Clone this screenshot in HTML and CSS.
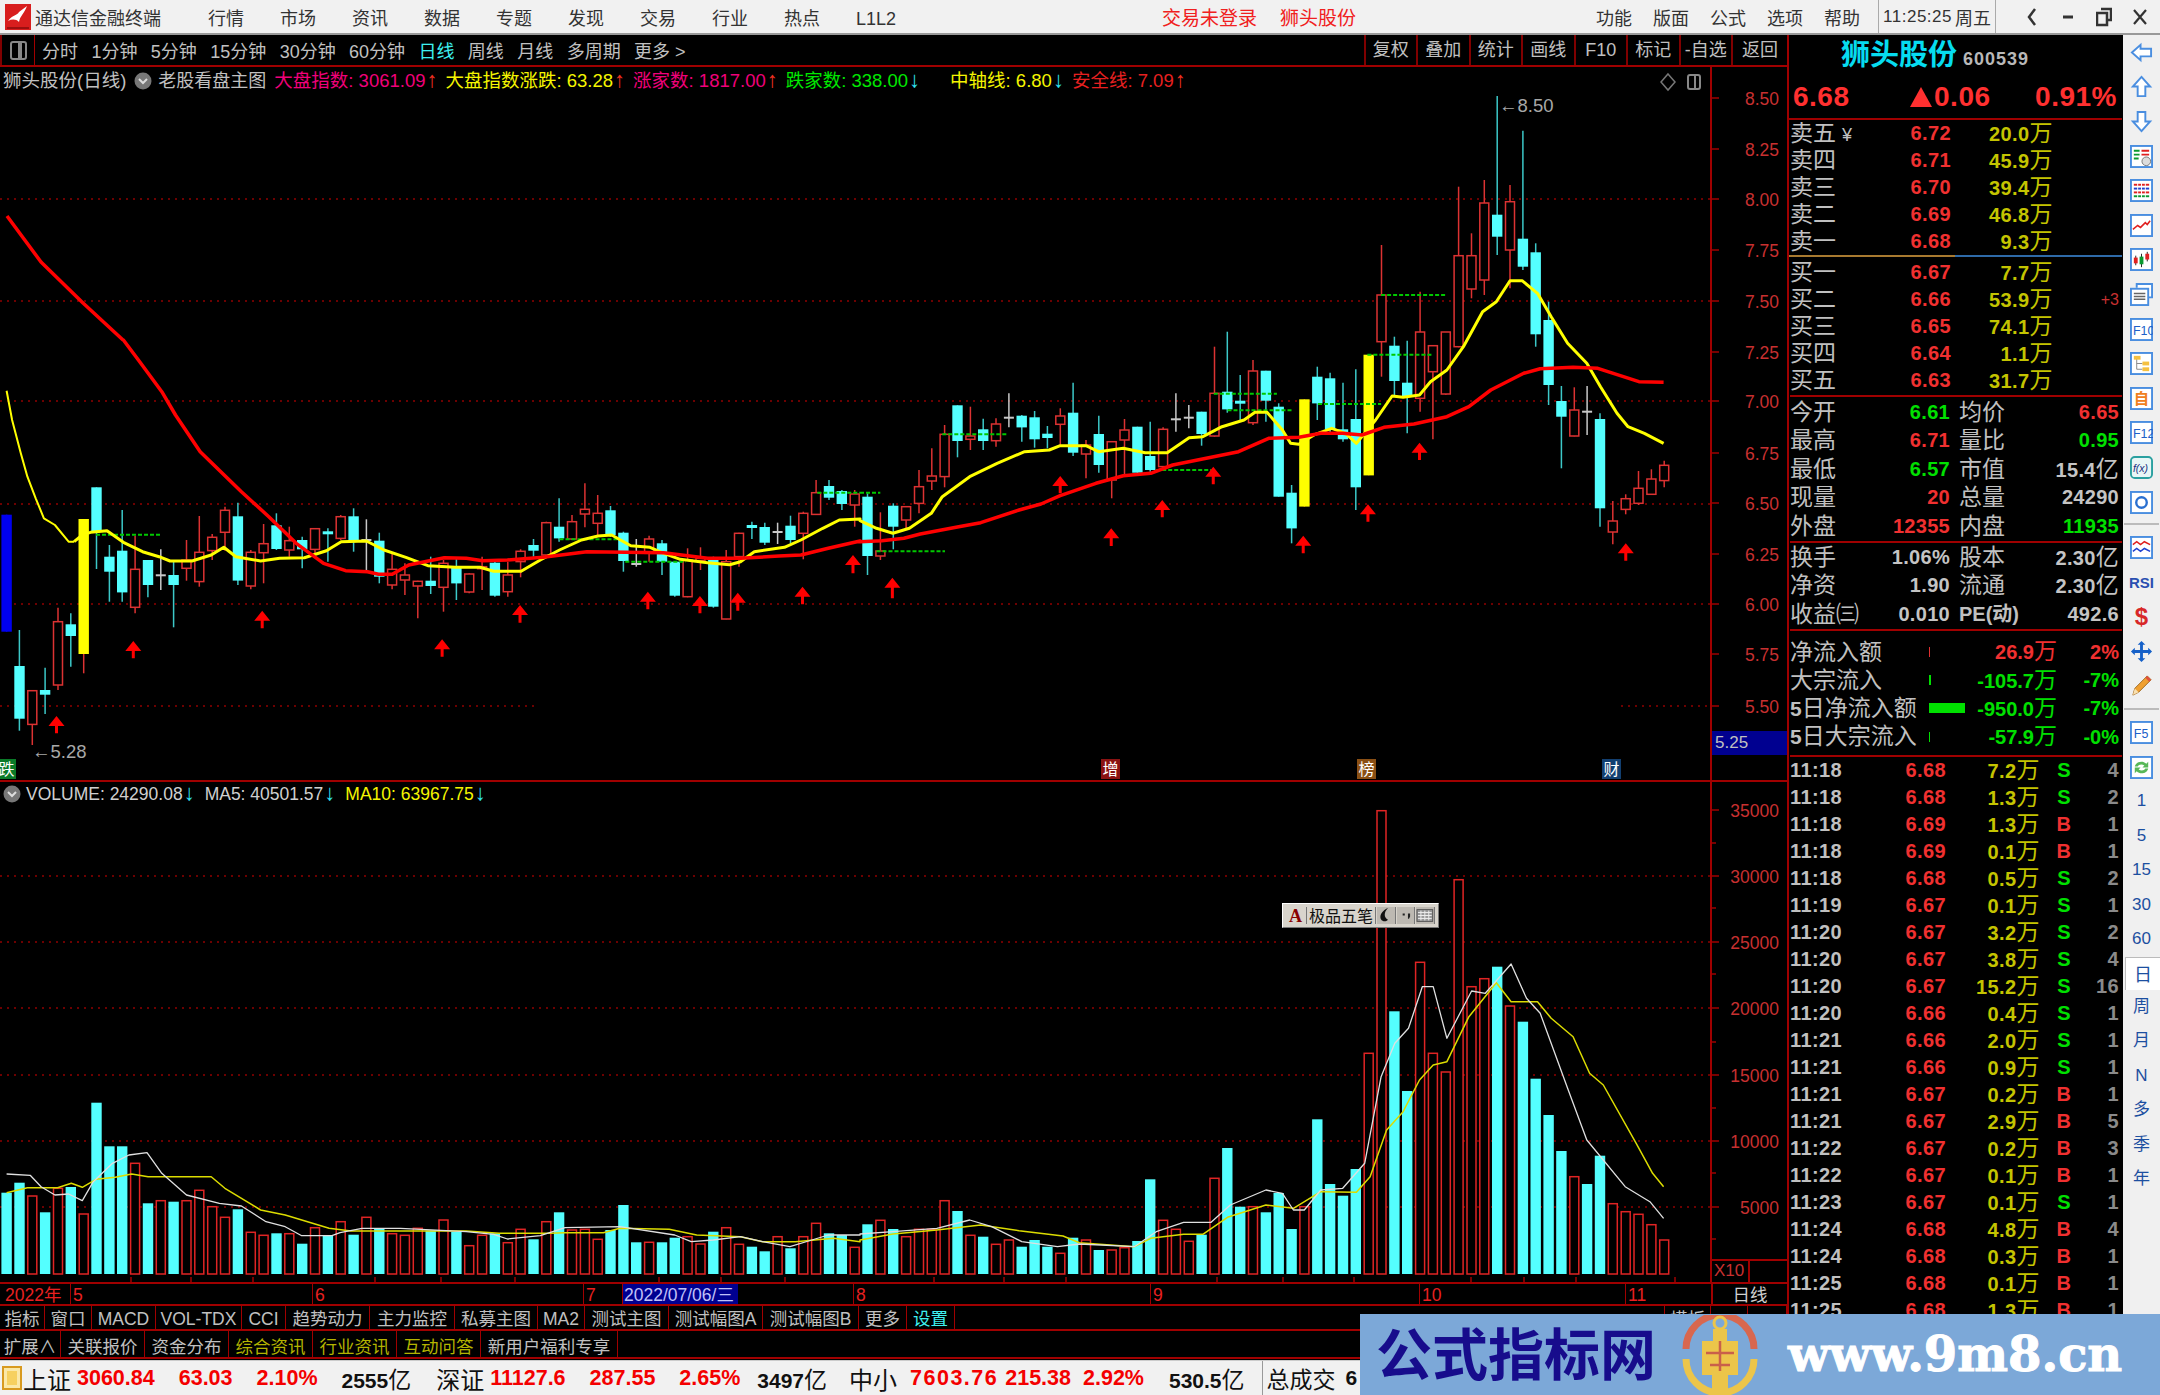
FILE: index.html
```html
<!DOCTYPE html>
<html lang="zh-CN">
<head>
    <meta charset="UTF-8">
    <title>通达信金融终端</title>
    <link rel="stylesheet" href="styles.css">
</head>
<body>
    <header class="topbar">
        <svg class="logo" viewBox="0 0 26 26">
            <rect width="26" height="26" fill="#d81e1e"/>
            <path d="M3 17 C8 10 12 12 14 8 L22 2 C19 10 15 12 14 18 C11 15 7 15 3 17Z" fill="#fff"/>
            <path d="M2 24 L24 24" stroke="#9b1010" stroke-width="2"/>
        </svg>
        <span class="app-name">通达信金融终端</span>
        <nav class="menu">
            <span>行情</span><span>市场</span><span>资讯</span><span>数据</span><span>专题</span>
            <span>发现</span><span>交易</span><span>行业</span><span>热点</span><span>L1L2</span>
        </nav>
        <div class="notice"><span>交易未登录</span><span>狮头股份</span></div>
        <nav class="menu menu-right">
            <span>功能</span><span>版面</span><span>公式</span><span>选项</span><span>帮助</span>
        </nav>
        <div class="clock"><span>11:25:25</span><span class="weekday">周五</span></div>
        <div class="winctl">
            <svg viewBox="0 0 16 20"><path d="M11 2 L5 10 L11 18" fill="none" stroke="#333" stroke-width="2.5"/></svg>
            <svg viewBox="0 0 16 20"><path d="M3 10 H13" stroke="#333" stroke-width="3"/></svg>
            <svg viewBox="0 0 16 20"><path d="M5 2 H15 V13 H12 M1 6 H11 V18 H1Z" fill="none" stroke="#333" stroke-width="2.5"/></svg>
            <svg viewBox="0 0 16 20"><path d="M2 3 L14 17 M14 3 L2 17" stroke="#333" stroke-width="2.2"/></svg>
        </div>
    </header>

    <div class="workspace">
        <main class="main">
            <div class="toolbar">
                <div class="tb-icon"><span class="tb-glyph"></span></div>
                <div class="periods">
                    <span>分时</span><span>1分钟</span><span>5分钟</span><span>15分钟</span><span>30分钟</span><span>60分钟</span>
                    <span class="cyan">日线</span><span>周线</span><span>月线</span><span>多周期</span><span>更多 &gt;</span>
                </div>
                <div class="actions">
                    <span>复权</span><span>叠加</span><span>统计</span><span>画线</span><span>F10</span><span>标记</span><span>-自选</span><span>返回</span>
                </div>
            </div>

            <div class="chart-wrap">
                <svg id="chart" class="chart" viewBox="0 67 1787 1215" width="1787" height="1215"></svg>

                <div class="legend price-legend">
                    <span class="gray">狮头股份(日线)</span>
                    <svg class="chev" viewBox="0 0 18 18"><circle cx="9" cy="9" r="8.5" fill="#777"/><path d="M5 7 L9 11 L13 7" fill="none" stroke="#ddd" stroke-width="2"/></svg>
                    <span class="gray main-name">老股看盘主图</span>
                    <span class="pink">大盘指数: 3061.09<i class="up">↑</i></span>
                    <span class="yellow">大盘指数涨跌: 63.28<i class="up">↑</i></span>
                    <span class="pink">涨家数: 1817.00<i class="up">↑</i></span>
                    <span class="green">跌家数: 338.00<i class="down">↓</i></span>
                    <span class="yellow mid">中轴线: 6.80<i class="down">↓</i></span>
                    <span class="red">安全线: 7.09<i class="up">↑</i></span>
                </div>
                <div class="chart-tools">
                    <svg viewBox="0 0 16 20"><path d="M8 2 L15 10 L8 18 L1 10Z" fill="none" stroke="#777" stroke-width="1.5"/></svg>
                    <span class="tb-glyph small"></span>
                </div>

                <span class="peak hi">←8.50</span>
                <span class="peak lo">←5.28</span>
                <span class="badge b-green">跌</span>
                <span class="badge b-red">增</span>
                <span class="badge b-brown">榜</span>
                <span class="badge b-blue">财</span>
                <span class="cursor-price">5.25</span>

                <div class="legend vol-legend">
                    <svg class="chev" viewBox="0 0 18 18"><circle cx="9" cy="9" r="8.5" fill="#777"/><path d="M5 7 L9 11 L13 7" fill="none" stroke="#ddd" stroke-width="2"/></svg>
                    <span class="light">VOLUME: 24290.08<i class="down">↓</i></span>
                    <span class="light">MA5: 40501.57<i class="down">↓</i></span>
                    <span class="yellow">MA10: 63967.75<i class="down">↓</i></span>
                </div>

                <div class="ime">
                    <span class="ime-a">A</span>
                    <span class="ime-name">极品五笔</span>
                    <span class="ime-btn">
                        <svg viewBox="0 0 14 16"><path d="M9 1 C5 5 5 10 9 12 C6 15 1 13 2 8 C3 5 6 2 9 1Z" fill="#111"/></svg>
                    </span>
                    <span class="ime-btn">
                        <svg viewBox="0 0 14 16"><path d="M4 6 H6 V8 H4Z M9 6 H11 V9 L10 11 H9Z" fill="#222"/></svg>
                    </span>
                    <span class="ime-btn">
                        <svg viewBox="0 0 18 16"><rect x="1" y="2" width="16" height="12" fill="#999" stroke="#555"/><path d="M2 5 H16 M2 8 H16 M2 11 H16 M5 3 V13 M9 3 V13 M13 3 V13" stroke="#eee"/></svg>
                    </span>
                </div>
            </div>

            <div class="timeline">
                <span class="red">2022年</span><span class="red">5</span><span class="red">6</span><span class="red">7</span>
                <span class="date-tag">2022/07/06/三</span><span class="tl-gap"></span>
                <span class="red">8</span><span class="red">9</span><span class="red">10</span><span class="red">11</span>
                <span class="tl-end">日线</span>
            </div>

            <div class="tabs tabs-one">
                <span>指标</span><span>窗口</span><span>MACD</span><span>VOL-TDX</span><span>CCI</span><span>趋势动力</span><span>主力监控</span>
                <span>私募主图</span><span>MA2</span><span>测试主图</span><span>测试幅图A</span><span>测试幅图B</span><span>更多</span><span class="cyan">设置</span>
                <span></span><span>模板</span><span></span><span></span>
            </div>
            <div class="tabs tabs-two">
                <span>扩展∧</span><span>关联报价</span><span>资金分布</span><span class="olive">综合资讯</span>
                <span class="olive">行业资讯</span><span class="olive">互动问答</span><span>新用户福利专享</span>
            </div>
        </main>

        <aside class="panel">
            <div class="stock-title"><span class="stock-name">狮头股份</span><span class="stock-code">600539</span></div>
            <div class="quote"><span>6.68</span><span class="q-chg"><i class="tri"></i>0.06</span><span>0.91%</span></div>

            <section class="book">
                <div><span>卖五<i class="yen">¥</i></span><b>6.72</b><em>20.0<u>万</u></em><small></small></div>
                <div><span>卖四</span><b>6.71</b><em>45.9<u>万</u></em><small></small></div>
                <div><span>卖三</span><b>6.70</b><em>39.4<u>万</u></em><small></small></div>
                <div><span>卖二</span><b>6.69</b><em>46.8<u>万</u></em><small></small></div>
                <div><span>卖一</span><b>6.68</b><em>9.3<u>万</u></em><small></small></div>
            </section>
            <div class="book-split"></div>
            <section class="book">
                <div><span>买一</span><b>6.67</b><em>7.7<u>万</u></em><small></small></div>
                <div><span>买二</span><b>6.66</b><em>53.9<u>万</u></em><small>+3</small></div>
                <div><span>买三</span><b>6.65</b><em>74.1<u>万</u></em><small></small></div>
                <div><span>买四</span><b>6.64</b><em>1.1<u>万</u></em><small></small></div>
                <div><span>买五</span><b>6.63</b><em>31.7<u>万</u></em><small></small></div>
            </section>

            <section class="stats first">
                <div><span>今开</span><b class="g">6.61</b><span>均价</span><b class="r">6.65</b></div>
                <div><span>最高</span><b class="r">6.71</b><span>量比</span><b class="g">0.95</b></div>
                <div><span>最低</span><b class="g">6.57</b><span>市值</span><b>15.4<u>亿</u></b></div>
                <div><span>现量</span><b class="r">20</b><span>总量</span><b>24290</b></div>
                <div><span>外盘</span><b class="r">12355</b><span>内盘</span><b class="g">11935</b></div>
            </section>
            <section class="stats">
                <div><span>换手</span><b>1.06%</b><span>股本</span><b>2.30<u>亿</u></b></div>
                <div><span>净资</span><b>1.90</b><span>流通</span><b>2.30<u>亿</u></b></div>
                <div><span>收益㈢</span><b>0.010</b><span class="pe">PE(动)</span><b>492.6</b></div>
            </section>

            <section class="flows">
                <div><span>净流入额</span><i class="flow-bar fb-red"></i><b class="r">26.9<u>万</u></b><b class="r">2%</b></div>
                <div><span>大宗流入</span><i class="flow-bar fb-green2"></i><b class="g">-105.7<u>万</u></b><b class="g">-7%</b></div>
                <div><span><strong>5</strong>日净流入额</span><i class="flow-bar fb-wide"></i><b class="g">-950.0<u>万</u></b><b class="g">-7%</b></div>
                <div><span><strong>5</strong>日大宗流入</span><i class="flow-bar fb-green"></i><b class="g">-57.9<u>万</u></b><b class="g">-0%</b></div>
            </section>

            <section class="trades">
                <div><span>11:18</span><b>6.68</b><em>7.2<u>万</u></em><i class="s">S</i><small>4</small></div>
                <div><span>11:18</span><b>6.68</b><em>1.3<u>万</u></em><i class="s">S</i><small>2</small></div>
                <div><span>11:18</span><b>6.69</b><em>1.3<u>万</u></em><i class="b">B</i><small>1</small></div>
                <div><span>11:18</span><b>6.69</b><em>0.1<u>万</u></em><i class="b">B</i><small>1</small></div>
                <div><span>11:18</span><b>6.68</b><em>0.5<u>万</u></em><i class="s">S</i><small>2</small></div>
                <div><span>11:19</span><b>6.67</b><em>0.1<u>万</u></em><i class="s">S</i><small>1</small></div>
                <div><span>11:20</span><b>6.67</b><em>3.2<u>万</u></em><i class="s">S</i><small>2</small></div>
                <div><span>11:20</span><b>6.67</b><em>3.8<u>万</u></em><i class="s">S</i><small>4</small></div>
                <div><span>11:20</span><b>6.67</b><em>15.2<u>万</u></em><i class="s">S</i><small>16</small></div>
                <div><span>11:20</span><b>6.66</b><em>0.4<u>万</u></em><i class="s">S</i><small>1</small></div>
                <div><span>11:21</span><b>6.66</b><em>2.0<u>万</u></em><i class="s">S</i><small>1</small></div>
                <div><span>11:21</span><b>6.66</b><em>0.9<u>万</u></em><i class="s">S</i><small>1</small></div>
                <div><span>11:21</span><b>6.67</b><em>0.2<u>万</u></em><i class="b">B</i><small>1</small></div>
                <div><span>11:21</span><b>6.67</b><em>2.9<u>万</u></em><i class="b">B</i><small>5</small></div>
                <div><span>11:22</span><b>6.67</b><em>0.2<u>万</u></em><i class="b">B</i><small>3</small></div>
                <div><span>11:22</span><b>6.67</b><em>0.1<u>万</u></em><i class="b">B</i><small>1</small></div>
                <div><span>11:23</span><b>6.67</b><em>0.1<u>万</u></em><i class="s">S</i><small>1</small></div>
                <div><span>11:24</span><b>6.68</b><em>4.8<u>万</u></em><i class="b">B</i><small>4</small></div>
                <div><span>11:24</span><b>6.68</b><em>0.3<u>万</u></em><i class="b">B</i><small>1</small></div>
                <div><span>11:25</span><b>6.68</b><em>0.1<u>万</u></em><i class="b">B</i><small>1</small></div>
                <div><span>11:25</span><b>6.68</b><em>1.3<u>万</u></em><i class="b">B</i><small>1</small></div>
            </section>
        </aside>

        <aside class="sidebar">
            <div class="tool"><svg viewBox="0 0 24 24"><path d="M2 12 L11 4 V8 H22 V16 H11 V20Z" fill="#fff" stroke="#4a8ee0" stroke-width="2"/></svg></div>
            <div class="tool"><svg viewBox="0 0 24 24"><path d="M12 2 L21 12 H16 V22 H8 V12 H3Z" fill="#fff" stroke="#4a8ee0" stroke-width="2"/></svg></div>
            <div class="tool"><svg viewBox="0 0 24 24"><path d="M12 22 L21 12 H16 V2 H8 V12 H3Z" fill="#fff" stroke="#4a8ee0" stroke-width="2"/></svg></div>
            <div class="tool"><svg viewBox="0 0 24 24"><rect x="1" y="1" width="22" height="22" fill="#fff" stroke="#4a8ee0" stroke-width="2"/><path d="M4 6 H10 M4 10 H10 M4 14 H9" stroke="#0a9a30" stroke-width="2"/><path d="M12 6 H20 M12 10 H20" stroke="#e02020" stroke-width="2"/><circle cx="17" cy="17" r="4.5" fill="#ddd" stroke="#777"/></svg></div>
            <div class="tool"><svg viewBox="0 0 24 24"><rect x="1" y="1" width="22" height="22" fill="#fff" stroke="#4a8ee0" stroke-width="2"/><path d="M4 6 H20" stroke="#e02020" stroke-width="2"/><path d="M4 10 H20" stroke="#2040d0" stroke-width="2"/><path d="M4 14 H20" stroke="#e02020" stroke-width="2"/><path d="M4 18 H20" stroke="#0a9a30" stroke-width="2"/><path d="M8 4 V21 M12 4 V21 M16 4 V21" stroke="#fff"/></svg></div>
            <div class="tool"><svg viewBox="0 0 24 24"><rect x="1" y="1" width="22" height="22" fill="#fff" stroke="#4a8ee0" stroke-width="2"/><path d="M3 16 L8 12 L11 14 L16 9 L18 11 L21 7" fill="none" stroke="#e02020" stroke-width="1.6"/></svg></div>
            <div class="tool"><svg viewBox="0 0 24 24"><rect x="1" y="1" width="22" height="22" fill="#fff" stroke="#4a8ee0" stroke-width="2"/><path d="M6 8 V18 M12 6 V20 M18 4 V14" stroke="#222"/><rect x="4" y="10" width="4" height="6" fill="#e02020"/><rect x="10" y="9" width="4" height="8" fill="#0a9a30"/><rect x="16" y="6" width="4" height="6" fill="#e02020"/></svg></div>
            <div class="tool"><svg viewBox="0 0 24 24"><path d="M7 5 V1 H23 V15 H19" fill="#fff" stroke="#4a8ee0" stroke-width="2"/><rect x="1" y="6" width="18" height="17" fill="#fff" stroke="#4a8ee0" stroke-width="2"/><path d="M4 11 H16 M4 14 H16 M4 17 H16" stroke="#666" stroke-width="1.5"/></svg></div>
            <div class="tool"><svg viewBox="0 0 24 24"><rect x="1" y="1" width="22" height="22" fill="#fff" stroke="#4a8ee0" stroke-width="2"/><text x="3" y="18" class="ico-text">F10</text></svg></div>
            <div class="tool"><svg viewBox="0 0 24 24"><rect x="1" y="1" width="22" height="22" fill="#fff" stroke="#4a8ee0" stroke-width="2"/><path d="M7 7 V18 H13 M7 12 H13" fill="none" stroke="#888"/><rect x="4" y="4" width="7" height="4" fill="#f5c040"/><rect x="13" y="10" width="7" height="4" fill="#f5c040"/><rect x="13" y="16" width="7" height="4" fill="#f5c040"/></svg></div>
            <div class="tool"><svg viewBox="0 0 24 24"><rect x="1" y="1" width="22" height="22" fill="#fff" stroke="#4a8ee0" stroke-width="2"/><text x="4" y="18" class="ico-zi">自</text></svg></div>
            <div class="tool"><svg viewBox="0 0 24 24"><rect x="1" y="1" width="22" height="22" fill="#fff" stroke="#4a8ee0" stroke-width="2"/><text x="3" y="18" class="ico-text">F12</text></svg></div>
            <div class="tool"><svg viewBox="0 0 24 24"><rect x="1" y="1" width="22" height="22" rx="4" fill="#e8f6f6" stroke="#2aa0a0" stroke-width="2"/><text x="3" y="17" class="ico-fx">f(x)</text></svg></div>
            <div class="tool"><svg viewBox="0 0 24 24"><rect x="1" y="1" width="22" height="22" fill="#fff" stroke="#4a8ee0" stroke-width="2"/><circle cx="12" cy="12" r="5.5" fill="none" stroke="#2a70d0" stroke-width="2.5"/></svg></div>
            <hr class="tool-sep sep-a">
            <div class="tool"><svg viewBox="0 0 24 24"><rect x="1" y="1" width="22" height="22" fill="#fff" stroke="#4a8ee0" stroke-width="2"/><path d="M3 9 L7 6 L11 9 L15 6 L21 9" fill="none" stroke="#e02020" stroke-width="1.6"/><path d="M3 16 L7 13 L11 16 L15 13 L21 16" fill="none" stroke="#2040d0" stroke-width="1.6"/></svg></div>
            <div class="tool"><span class="ico-rsi">RSI</span></div>
            <div class="tool"><span class="ico-dollar">$</span></div>
            <div class="tool"><svg viewBox="0 0 24 24"><path d="M12 1 L16 5 H13.5 V10.5 H19 V8 L23 12 L19 16 V13.5 H13.5 V19 H16 L12 23 L8 19 H10.5 V13.5 H5 V16 L1 12 L5 8 V10.5 H10.5 V5 H8Z" fill="#1560c8"/></svg></div>
            <div class="tool"><svg viewBox="0 0 24 24"><path d="M3 22 L5 15 L18 2 L22 6 L9 19Z" fill="#f0a030" stroke="#a06a20"/><path d="M3 22 L5 15 L9 19Z" fill="#f8e0b0"/><path d="M18 2 L22 6 L20 8 L16 4Z" fill="#e05040"/></svg></div>
            <hr class="tool-sep sep-b">
            <div class="tool"><svg viewBox="0 0 24 24"><rect x="1" y="1" width="22" height="22" fill="#fff" stroke="#4a8ee0" stroke-width="2"/><text x="4" y="18" class="ico-text">F5</text></svg></div>
            <div class="tool"><svg viewBox="0 0 24 24"><rect x="1" y="1" width="22" height="22" fill="#fff" stroke="#4a8ee0" stroke-width="2"/><path d="M5 11 C6 6 13 4 17 8 L19 6 V12 H13 L15 10 C12 8 9 9 8 11Z M19 13 C18 18 11 20 7 16 L5 18 V12 H11 L9 14 C12 16 15 15 16 13Z" fill="#58b858"/></svg></div>
            <div class="period">1</div>
            <div class="period">5</div>
            <div class="period">15</div>
            <div class="period">30</div>
            <div class="period">60</div>
            <div class="period active">日</div>
            <div class="period">周</div>
            <div class="period">月</div>
            <div class="period">N</div>
            <div class="period">多</div>
            <div class="period">季</div>
            <div class="period">年</div>
        </aside>
    </div>

    <footer class="statusbar">
        <span class="st-icon"></span>
        <span class="st-name">上证</span><b class="st-first">3060.84</b><b>63.03</b><b>2.10%</b><strong>2555<u>亿</u></strong>
        <span class="st-name">深证</span><b class="st-first">11127.6</b><b>287.55</b><b>2.65%</b><strong class="st-sz">3497<u>亿</u></strong>
        <span class="st-name st-zx">中小</span><b class="st-wide">7603.76</b><b class="st-zx-chg">215.38</b><b class="st-zx-pct">2.92%</b><strong class="st-zx-amt">530.5<u>亿</u></strong>
        <span class="st-total">总成交</span><strong class="st-last">6</strong>
    </footer>

    <div class="watermark">
        <span class="wm-cn">公式指标网</span>
        <svg class="wm-logo" viewBox="0 0 80 80">
            <path d="M6 34 A34 34 0 0 1 74 34" fill="none" stroke="#d8674f" stroke-width="7"/>
            <path d="M6 44 A34 34 0 0 0 40 78 A34 34 0 0 0 74 44" fill="none" stroke="#ecc54a" stroke-width="7"/>
            <circle cx="40" cy="8" r="6" fill="none" stroke="#ecc54a" stroke-width="3"/>
            <path d="M33 14 H47 V26 H58 V60 H48 V78 H32 V60 H22 V26 H33Z" fill="#ecc54a"/>
            <path d="M26 38 H54 M40 26 V56 M30 50 H50" stroke="#c9604a" stroke-width="2.5"/>
        </svg>
        <span class="wm-url">www.9m8.cn</span>
    </div>

    <script src="chart.js"></script>
</body>
</html>
```

FILE: styles.css
```css
* {
    box-sizing: border-box;
}
html, body {
    margin: 0;
    padding: 0;
}
body {
    position: relative;
    width: 2160px;
    height: 1395px;
    overflow: hidden;
    background: #000;
    color: #c0c0c0;
    font-family: "Liberation Sans", "Noto Sans CJK SC", sans-serif;
    font-size: 18px;
}
i, em, u {
    font-style: normal;
    text-decoration: none;
}
.cyan { color: #3ef0f0; }
.gray { color: #c0c0c0; }
.light { color: #d0d0d0; }
.pink { color: #f0007a; }
.yellow { color: #f5f500; }
.green { color: #00e800; }
.red { color: #e82020; }
.olive { color: #b4b400; }

/* title bar */
.topbar {
    display: flex;
    align-items: center;
    height: 35px;
    background: #f1f1f1;
    border-bottom: 2px solid #999;
    color: #333;
}
.logo {
    width: 26px;
    height: 26px;
    margin-left: 5px;
}
.app-name {
    margin-left: 4px;
    width: 126px;
    white-space: nowrap;
}
.menu {
    display: flex;
    align-items: baseline;
    gap: 36px;
    margin-left: 47px;
}
.menu-right {
    gap: 21px;
    margin-left: 240px;
}
.notice {
    display: flex;
    gap: 23px;
    margin-left: 266px;
    color: #f02020;
    font-size: 19px;
}
.clock {
    display: flex;
    gap: 3px;
    align-items: center;
    height: 33px;
    margin-left: 18px;
    padding: 0 4px;
    border-left: 1px solid #aaa;
    border-right: 1px solid #aaa;
    font-size: 17px;
    letter-spacing: 0.5px;
}
.weekday {
    font-size: 18px;
    letter-spacing: 0;
}
.winctl {
    display: flex;
    gap: 20px;
    margin-left: 28px;
}
.winctl svg {
    width: 16px;
    height: 20px;
}

/* main layout */
.workspace {
    display: flex;
    height: 1325px;
}
.main {
    flex: 0 0 1787px;
    display: flex;
    flex-direction: column;
}
.toolbar {
    display: flex;
    align-items: center;
    height: 32px;
    border-bottom: 2px solid #a00000;
}
.tb-icon {
    display: flex;
    align-items: center;
    justify-content: center;
    width: 35px;
    height: 30px;
    border-left: 2px solid #800000;
    border-right: 1px solid #a00000;
}
.tb-glyph {
    display: block;
    width: 17px;
    height: 19px;
    border: 2px solid #888;
    border-radius: 3px;
    background: linear-gradient(to right, #000 50%, #888 50%, #888 75%, #000 75%);
}
.tb-glyph.small {
    width: 14px;
    height: 16px;
}
.periods {
    display: flex;
    gap: 13.4px;
    margin-left: 7px;
    white-space: nowrap;
}
.actions {
    display: flex;
    margin-left: auto;
    height: 30px;
}
.actions span {
    flex: 0 0 52.5px;
    border-left: 2px solid #800000;
    text-align: center;
    line-height: 30px;
    white-space: nowrap;
}
.actions span:last-child {
    flex-basis: 56px;
}

/* chart stage, overlays below sit on the svg */
.chart-wrap {
    position: relative;
    height: 1215px;
    flex: 0 0 1215px;
}
.chart {
    display: block;
}
.chart text {
    font-family: "Liberation Sans", sans-serif;
}
.legend {
    position: absolute;
    left: 3px;
    display: flex;
    align-items: center;
    white-space: nowrap;
    font-size: 18.5px;
    line-height: 24px;
}
.legend i {
    margin-left: 1px;
    font-size: 22px;
    font-weight: bold;
    line-height: 20px;
}
.legend .up { color: #f03020; }
.legend .down { color: #30e0f0; }
.price-legend {
    top: 2px;
    gap: 8px;
}
.price-legend .main-name {
    margin-left: -2px;
    font-size: 18px;
}
.price-legend .mid {
    margin-left: 22px;
}
.vol-legend {
    top: 715px;
    gap: 10px;
    font-size: 17.5px;
}
.chev {
    width: 18px;
    height: 18px;
}
.vol-legend .chev {
    margin-right: -5px;
}
.chart-tools {
    position: absolute;
    top: 5px;
    left: 1660px;
    display: flex;
    align-items: center;
    gap: 11px;
}
.chart-tools svg {
    width: 16px;
    height: 20px;
}
.peak {
    position: absolute;
    color: #a8a8a8;
    font-size: 18.5px;
    white-space: nowrap;
}
.peak.hi {
    top: 28px;
    left: 1499px;
}
.peak.lo {
    top: 674px;
    left: 32px;
}
.badge {
    position: absolute;
    top: 692px;
    width: 19px;
    height: 20px;
    color: #fff;
    font-size: 16px;
    line-height: 21px;
    text-align: center;
}
.b-green { left: -3px; background: #0a7a28; }
.b-red { left: 1101px; background: #8a1212; }
.b-brown { left: 1357px; background: #8a4f14; }
.b-blue { left: 1602px; background: #123f70; }
.cursor-price {
    position: absolute;
    top: 664px;
    left: 1712px;
    width: 75px;
    height: 24px;
    padding-left: 3px;
    background: #000090;
    color: #c0c0c0;
    font-size: 17px;
    line-height: 24px;
}
.ime {
    position: absolute;
    top: 836px;
    left: 1282px;
    display: flex;
    align-items: stretch;
    gap: 1px;
    width: 157px;
    height: 25px;
    padding: 3px;
    background: #d8d4cc;
    border: 1px solid #fff;
    border-right-color: #777;
    border-bottom-color: #777;
    color: #111;
    font-size: 16px;
    line-height: 19px;
}
.ime-a {
    width: 19px;
    color: #8a0000;
    font-family: "Liberation Serif", serif;
    font-size: 18px;
    font-weight: bold;
    text-align: center;
}
.ime-name {
    width: 70px;
    white-space: nowrap;
    border-left: 1px solid #777;
    border-right: 1px solid #777;
    text-align: center;
}
.ime-btn {
    flex: 1;
    border-right: 1px solid #777;
    background: #bdb9b2;
}
.ime-btn svg {
    display: block;
    width: 100%;
    height: 100%;
}

/* time axis and tab rows */
.timeline {
    display: grid;
    grid-template-columns: 70px 242px 271px 39px 116px 115px 297px 269px 206px 86px 76px;
    height: 24px;
    border-top: 2px solid #a00000;
    border-bottom: 2px solid #a00000;
    font-size: 17.5px;
    line-height: 17px;
}
.timeline span {
    padding: 3px 0 0 2px;
    border-left: 1px solid #a00000;
    white-space: nowrap;
}
.timeline span:first-child {
    padding-left: 5px;
    border-left: 0;
}
.timeline .date-tag {
    padding-left: 1px;
    background: #000090;
    color: #c0c0f8;
}
.timeline .tl-gap {
    border-left: 0;
}
.timeline .tl-end {
    padding-left: 0;
    border-left: 2px solid #a00000;
    color: #d0d0d0;
    text-align: center;
}
.tabs {
    display: grid;
    border-bottom: 2px solid #a00000;
    white-space: nowrap;
    font-size: 17.5px;
}
.tabs span {
    border-right: 1px solid #a00000;
    text-align: center;
}
.tabs-one {
    grid-template-columns: 45px 47px 64px 86px 44px 84px 85px 83px 47px 84px 94px 96px 48px 48px 710px 46px 37px 39px;
    height: 25px;
    line-height: 19px;
}
.tabs-one span {
    padding-top: 4px;
}
.tabs-two {
    grid-template-columns: 61px 84px 84px 84px 84px 84px 137px;
    height: 28px;
    line-height: 20px;
}
.tabs-two span {
    padding-top: 6px;
}

/* right quote panel */
.panel {
    flex: 0 0 336px;
    overflow: hidden;
    border-left: 2px solid #a00000;
    border-right: 1px solid #000;
    padding-left: 1px;
}
.stock-title {
    display: flex;
    align-items: baseline;
    height: 40px;
    padding-left: 51px;
    line-height: 40px;
}
.stock-name {
    color: #06dcf0;
    font-size: 29px;
    font-weight: bold;
}
.stock-code {
    margin-left: 6px;
    color: #b8b8b8;
    font-size: 18px;
    font-weight: bold;
    letter-spacing: 1px;
}
.quote {
    display: flex;
    justify-content: space-between;
    align-items: center;
    height: 45px;
    margin-left: -1px;
    padding: 0 5px 0 4px;
    border-bottom: 2px solid #a00000;
    color: #ff3030;
    font-size: 28px;
    font-weight: bold;
    letter-spacing: 0.5px;
}
.q-chg {
    display: flex;
    align-items: center;
    margin-left: 16px;
}
.tri {
    width: 0;
    height: 0;
    margin-right: 2px;
    border-left: 11px solid transparent;
    border-right: 11px solid transparent;
    border-bottom: 20px solid #ff3030;
}
.book > div {
    display: grid;
    grid-template-columns: 110px 51px 102px 66px;
    height: 27px;
    line-height: 27px;
    white-space: nowrap;
}
.book span {
    font-size: 23px;
}
.book .yen {
    margin-left: 6px;
    font-size: 18px;
}
.book b {
    color: #f03030;
    font-size: 20px;
    letter-spacing: 0.4px;
    text-align: right;
}
.book em {
    color: #c4c400;
    font-size: 20px;
    font-weight: bold;
    letter-spacing: 0.4px;
    text-align: right;
}
.book small {
    color: #c83030;
    font-size: 16px;
    text-align: right;
}
.panel u {
    font-size: 23px;
    font-weight: normal;
}
.book-split {
    height: 2px;
    margin: 0 0 2px -1px;
    background: linear-gradient(to right, #a87a30 50%, #2e6aa8 50%);
}
.stats {
    padding-bottom: 1px;
    border-top: 2px solid #a00000;
}
.stats.first {
    margin-top: 1px;
    padding-top: 1px;
}
.stats > div {
    display: grid;
    grid-template-columns: 70px 90px 9px 90px 70px;
    height: 28.4px;
    line-height: 28px;
    white-space: nowrap;
}
.stats span {
    font-size: 23px;
}
.stats span:nth-of-type(2) {
    grid-column: 4;
}
.stats b {
    font-size: 20px;
    text-align: right;
    color: #c4c4c4;
    letter-spacing: 0.3px;
}
.stats .g, .flows .g { color: #00e000; }
.stats .r, .flows .r { color: #f03030; }
.stats .pe {
    font-size: 20px;
    font-weight: bold;
}
.flows {
    padding: 6px 0 4px;
    border-top: 2px solid #a00000;
    border-bottom: 2px solid #a00000;
}
.flows > div {
    display: grid;
    grid-template-columns: 139px 40px 88px 62px;
    align-items: center;
    height: 28.4px;
    line-height: 28px;
    white-space: nowrap;
}
.flows span {
    font-size: 23px;
}
.flows strong {
    font-size: 21px;
}
.flows b {
    font-size: 20px;
    text-align: right;
}
.flow-bar {
    display: block;
    height: 10px;
    background: #00e000;
}
.fb-red { width: 1px; background: #e03030; }
.fb-green { width: 1px; }
.fb-green2 { width: 2px; }
.fb-wide { width: 36px; }
.trades > div {
    display: grid;
    grid-template-columns: 100px 56px 94px 48px 31px;
    height: 27px;
    line-height: 27px;
    font-size: 20px;
    font-weight: bold;
    letter-spacing: 0.4px;
    white-space: nowrap;
}
.trades b {
    color: #f03030;
    text-align: right;
}
.trades em {
    color: #c4c400;
    text-align: right;
}
.trades i {
    text-align: center;
}
.trades .s { color: #00e000; }
.trades .b { color: #f03030; }
.trades small {
    color: #8a8a8a;
    font-size: 20px;
    text-align: right;
}

/* right tool strip */
.sidebar {
    flex: 0 0 37px;
    background: #f0f0f0;
}
.tool {
    display: flex;
    align-items: center;
    justify-content: center;
    height: 34.6px;
}
.tool svg {
    width: 23px;
    height: 23px;
}
.tool-sep {
    height: 2px;
    margin: 0 1px;
    border: 0;
    background: #bbb;
}
.sep-a { margin-top: 4px; margin-bottom: 5px; }
.sep-b { margin-top: 5px; margin-bottom: 5px; }
.ico-text {
    fill: #2060c8;
    font-size: 13px;
    font-family: "Liberation Sans", sans-serif;
}
.ico-zi {
    fill: #f08020;
    font-size: 16px;
    font-weight: bold;
    font-family: "Noto Sans CJK SC", sans-serif;
}
.ico-fx {
    fill: #203080;
    font-size: 11px;
    font-style: italic;
    font-family: "Liberation Sans", sans-serif;
}
.ico-rsi {
    color: #2a4fb0;
    font-size: 15px;
    font-weight: bold;
}
.ico-dollar {
    color: #d82828;
    font-size: 24px;
    font-weight: bold;
    line-height: 1;
}
.period {
    height: 34.5px;
    color: #1c4fa0;
    font-size: 17px;
    line-height: 34px;
    text-align: center;
}
.period.active {
    height: 33px;
    margin-left: 2px;
    border-top: 1px solid #bbb;
    border-left: 1px solid #bbb;
    background: #fff;
    font-size: 18px;
}

/* index strip at the bottom */
.statusbar {
    display: flex;
    align-items: center;
    gap: 24px;
    height: 35px;
    background: #f1f1f1;
    border-top: 1px solid #ccc;
    color: #111;
    white-space: nowrap;
}
.statusbar b {
    color: #f40000;
    font-size: 21.5px;
}
.statusbar strong {
    color: #111;
    font-size: 21px;
}
.statusbar u {
    font-size: 23px;
    font-weight: normal;
}
.st-icon {
    width: 20px;
    height: 24px;
    margin-left: 2px;
    margin-right: -24px;
    border: 2px solid #d89a20;
    background: #f6d060;
    box-shadow: inset 0 0 0 3px #fbe8a8;
}
.st-name {
    font-size: 24px;
    margin-left: 1px;
}
.st-first {
    margin-left: -18px;
}
.st-sz {
    margin-left: -7px;
}
.st-zx {
    margin-left: -2px;
}
.st-wide {
    margin-left: -11px;
    letter-spacing: 1.5px;
}
.st-zx-chg {
    margin-left: -17px;
}
.st-zx-pct {
    margin-left: -12px;
}
.st-zx-amt {
    margin-left: 1px;
}
.st-total {
    margin-left: -7px;
    padding-left: 4px;
    border-left: 1px solid #999;
    font-size: 23px;
}
.st-last {
    margin-left: -14px;
}

/* site stamp across the bottom right corner */
.watermark {
    position: absolute;
    left: 1360px;
    top: 1314px;
    display: flex;
    align-items: center;
    width: 800px;
    height: 81px;
    background: #7ca8d8;
}
.wm-cn {
    margin: -8px 0 0 16px;
    color: #170c8c;
    font-size: 56px;
    font-weight: bold;
    white-space: nowrap;
}
.wm-logo {
    width: 80px;
    height: 80px;
    margin-left: 24px;
}
.wm-url {
    margin: -2px 0 0 28px;
    color: #fff;
    font-family: "DejaVu Serif", serif;
    font-size: 48px;
    font-weight: bold;
    -webkit-text-stroke: 1px #fff;
    white-space: nowrap;
}
```

FILE: chart.js
```js
// candle data read off the screenshot, y values are raw pixel rows of each half
// [wickTop, bodyTop, bodyBottom, wickBottom, kind]  c=cyan r=red w=doji y=yellow b=blue
const leftCandles = [
    [524, 524, 875, 875, 'b'], [870, 978, 1136, 1172, 'c'], [1050, 1052, 1153, 1215, 'r'], [983, 1050, 1064, 1122, 'c'],
    [803, 845, 1035, 1050, 'r'], [820, 853, 888, 980, 'c'], [537, 537, 942, 1000, 'y'], [442, 442, 575, 687, 'c'],
    [615, 650, 695, 785, 'c'], [510, 632, 757, 785, 'c'], [587, 688, 802, 820, 'r'], [660, 660, 735, 772, 'c'],
    [628, 706, 707, 750, 'w'], [665, 705, 735, 862, 'c'], [600, 660, 685, 722, 'r'], [528, 637, 725, 740, 'r'],
    [582, 592, 632, 660, 'r'], [500, 511, 577, 632, 'r'], [488, 529, 722, 735, 'c'], [630, 637, 738, 748, 'r'],
    [552, 611, 638, 730, 'r'], [520, 556, 627, 630, 'c'], [560, 602, 630, 650, 'r'], [590, 600, 628, 685, 'c'],
    [565, 566, 628, 640, 'r'], [565, 574, 582, 665, 'c'], [525, 530, 595, 600, 'r'], [505, 529, 605, 635, 'c'],
    [538, 600, 601, 690, 'w'], [578, 602, 710, 730, 'c'], [640, 688, 735, 748, 'r'], [670, 705, 720, 765, 'r'],
    [722, 724, 738, 835, 'r'], [650, 722, 738, 762, 'c'], [660, 670, 742, 815, 'r'], [655, 680, 730, 780, 'c'],
    [700, 702, 756, 760, 'r'], [650, 680, 684, 750, 'r'], [665, 668, 767, 770, 'c'], [665, 705, 755, 770, 'r'],
    [628, 634, 665, 712, 'r'], [597, 615, 632, 650, 'c'], [545, 548, 645, 648, 'r'], [475, 560, 595, 605, 'c'],
    [525, 545, 597, 600, 'r'], [430, 508, 522, 562, 'r'], [465, 520, 550, 590, 'r'], [498, 511, 585, 590, 'c'],
    [575, 578, 663, 695, 'c'], [597, 672, 673, 680, 'w'], [587, 597, 640, 665, 'r'], [600, 610, 665, 705, 'c'],
    [665, 665, 767, 770, 'c'], [625, 660, 770, 772, 'r'], [622, 655, 662, 690, 'r'], [650, 660, 800, 803, 'c'],
    [630, 665, 837, 838, 'r'], [578, 580, 650, 680, 'r'], [545, 555, 559, 597, 'c'], [548, 561, 608, 615, 'c'],
    [548, 576, 577, 612, 'w'], [527, 557, 600, 610, 'c'], [515, 520, 580, 658, 'r'], [420, 458, 523, 525, 'r'],
    [420, 438, 473, 480, 'c'], [450, 453, 492, 510, 'c'], [450, 462, 495, 560, 'r']
];
const rightCandles = [
    [1240, 1250, 1428, 1485, 'c'], [1297, 1413, 1428, 1440, 'r'], [1270, 1277, 1340, 1408, 'c'], [1278, 1280, 1320, 1350, 'r'],
    [1170, 1220, 1270, 1300, 'r'], [1105, 1188, 1203, 1230, 'r'], [1035, 1063, 1190, 1222, 'r'], [976, 976, 1083, 1132, 'c'],
    [980, 1068, 1078, 1110, 'r'], [1016, 1048, 1083, 1110, 'c'], [1015, 1032, 1082, 1100, 'r'], [940, 1013, 1014, 1042, 'w'],
    [1005, 1007, 1042, 1085, 'c'], [993, 1012, 1078, 1103, 'c'], [1038, 1061, 1074, 1105, 'c'], [985, 1008, 1033, 1095, 'r'],
    [908, 998, 1118, 1128, 'c'], [1080, 1095, 1122, 1195, 'r'], [1007, 1062, 1155, 1178, 'c'], [1083, 1085, 1200, 1255, 'r'],
    [1017, 1050, 1080, 1190, 'r'], [1040, 1040, 1178, 1180, 'c'], [1025, 1128, 1170, 1175, 'c'], [1042, 1048, 1160, 1165, 'r'],
    [940, 1018, 1019, 1055, 'w'], [975, 1013, 1014, 1045, 'w'], [995, 995, 1062, 1097, 'c'], [800, 940, 1068, 1070, 'r'],
    [755, 935, 988, 998, 'c'], [885, 962, 970, 1020, 'c'], [840, 873, 1028, 1035, 'r'], [872, 872, 962, 1025, 'c'],
    [970, 980, 1250, 1250, 'c'], [1215, 1238, 1345, 1390, 'c'], [958, 958, 1280, 1280, 'y'], [860, 890, 970, 1020, 'c'],
    [878, 895, 1048, 1060, 'c'], [908, 1048, 1078, 1085, 'c'], [868, 1017, 1222, 1290, 'c'], [824, 824, 1186, 1186, 'y'],
    [495, 645, 785, 890, 'r'], [770, 797, 903, 950, 'c'], [782, 908, 950, 1060, 'c'], [635, 756, 955, 995, 'r'],
    [797, 797, 875, 1078, 'r'], [756, 756, 942, 944, 'r'], [320, 527, 800, 802, 'r'], [460, 527, 627, 655, 'r'],
    [300, 369, 600, 645, 'r'], [48, 404, 470, 525, 'c'], [315, 365, 510, 625, 'r'], [152, 476, 560, 570, 'c'],
    [490, 517, 763, 800, 'c'], [665, 720, 915, 975, 'c'], [918, 963, 1010, 1165, 'c'], [922, 990, 1068, 1069, 'r'],
    [918, 995, 996, 1065, 'w'], [1000, 1017, 1285, 1340, 'c'], [1263, 1323, 1356, 1393, 'r'], [1243, 1256, 1288, 1303, 'r'],
    [1173, 1225, 1270, 1275, 'r'], [1168, 1197, 1243, 1245, 'r'], [1142, 1156, 1202, 1222, 'r']
];
// volume tops, same halves as above
const leftVolume = '458c 428c 468r 517c 445r 441c 522r 188c 319c 319c 370r 490c 482r 485c 482r 451r 500r 532r 508c 577r 586r 580c 581r 611c 563r 586c 545r 584c 532r 565c 581r 586r 565r 572c 540r 575c 617r 586r 580c 608r 568r 598c 545r 517c 570r 568r 598r 570c 495c 607c 607r 607c 593c 590r 612r 575c 563r 613r 620c 634c 590r 625c 590r 550r 580c 585c 622r';
const rightVolume = '1303c 1291r 1317c 1340r 1318r 1318r 1232r 1263c 1336r 1340c 1363r 1350r 1370c 1350c 1370c 1390r 1343c 1350r 1380c 1380r 1373r 1353c 1168c 1291r 1318r 1354r 1334c 1165r 1074c 1250c 1250r 1267c 1209c 1317c 1250r 988c 1182c 1217c 1137c 790r 62r 664c 903c 517r 790r 846r 269r 590r 566r 530c 648r 695c 866c 975c 1083c 1160r 1182c 1097c 1241r 1265r 1273r 1304r 1350r';

// line points, x / y as read from the two crops
const yellowHead = [[12,152],[22,240],[38,340],[50,410],[65,475],[80,535],[100,555],[125,605],[135,605]];
const yellowL = [[135,605],[150,585],[165,577],[195,572],[225,607],[260,635],[290,650],[310,663],[350,663],[385,645],[408,622],[430,650],[475,663],[510,655],[555,653],[595,632],[622,605],[668,603],[700,630],[740,652],[780,677],[830,682],[875,682],[900,694],[950,694],[985,660],[1020,630],[1060,600],[1090,588],[1115,585],[1150,617],[1185,622],[1210,640],[1240,658],[1290,668],[1330,674],[1350,665],[1375,635],[1430,622],[1460,600],[1500,565],[1530,540],[1568,537]];
const yellowR = [[0,1322],[30,1345],[60,1360],[90,1345],[130,1300],[150,1250],[200,1190],[250,1150],[300,1115],[345,1110],[365,1097],[412,1097],[435,1115],[480,1105],[520,1118],[560,1118],[600,1073],[625,1070],[660,1040],[700,1020],[720,997],[742,997],[770,1050],[785,1090],[800,1093],[830,1063],[860,1045],[885,1060],[905,1090],[940,1020],[970,948],[990,952],[1020,945],[1040,905],[1070,870],[1100,800],[1135,695],[1160,665],[1185,602],[1207,602],[1235,640],[1260,710],[1290,790],[1325,850],[1350,920],[1380,1000],[1400,1040],[1430,1060],[1465,1090]];
const redHead = [[7,216],[41,262],[83,303],[123,340]];
const redL = [[225,0],[250,55],[295,155],[320,225],[365,335],[440,455],[490,530],[540,610],[590,670],[630,692],[670,695],[690,703],[715,703],[745,675],[810,653],[850,655],[880,662],[925,660],[990,652],[1070,635],[1210,638],[1290,655],[1350,655],[1420,648],[1460,645],[1510,625],[1568,603]];
const redR = [[0,1385],[40,1382],[80,1375],[110,1362],[180,1340],[220,1328],[290,1290],[330,1272],[365,1247],[430,1210],[480,1187],[530,1180],[570,1155],[690,1115],[745,1075],[800,1072],[840,1060],[880,1060],[915,1065],[955,1042],[1010,1032],[1070,1010],[1110,980],[1150,930],[1210,880],[1240,866],[1300,862],[1345,865],[1420,905],[1465,907]];

const maWhiteL = [[12,402],[55,406],[75,440],[100,465],[125,462],[150,482],[170,425],[205,370],[235,345],[268,338],[295,400],[340,465],[400,490],[440,498],[485,545],[520,560],[550,587],[605,587],[620,578],[660,565],[730,565],[850,575],[900,583],[925,597],[985,587],[1030,563],[1130,560],[1230,585],[1260,605],[1300,600],[1350,590],[1390,605],[1440,620],[1480,600],[1510,585],[1568,585]];
const maWhiteR = [[0,1332],[60,1325],[140,1315],[200,1290],[240,1310],[295,1355],[360,1370],[400,1362],[500,1370],[540,1325],[590,1297],[640,1297],[675,1245],[740,1200],[770,1210],[790,1260],[810,1260],[840,1200],[880,1195],[920,1120],[950,860],[975,760],[1000,715],[1025,590],[1045,590],[1070,745],[1115,603],[1140,610],[1187,522],[1215,625],[1240,670],[1290,895],[1325,1050],[1395,1190],[1440,1235],[1465,1285]];
const maYellowL = [[12,458],[50,443],[105,443],[130,430],[150,442],[175,418],[210,412],[240,402],[270,410],[385,410],[410,445],[475,510],[520,525],[600,565],[640,573],[850,573],[910,580],[1000,580],[1030,578],[1100,578],[1130,565],[1220,568],[1270,585],[1350,590],[1390,605],[1450,605],[1520,595],[1568,605]];
const maYellowR = [[0,1350],[60,1332],[140,1320],[220,1305],[290,1322],[370,1338],[400,1358],[500,1370],[530,1345],[590,1333],[625,1333],[670,1282],[740,1245],[790,1255],[840,1205],[905,1207],[930,1160],[960,1020],[990,965],[1020,870],[1045,825],[1070,815],[1110,680],[1160,578],[1187,635],[1235,635],[1260,685],[1300,740],[1330,850],[1355,885],[1415,1060],[1445,1150],[1465,1190]];

const X_SCALE = 1.823;
const COLORS = { c: '#54ffff', r: '#dc3232', w: '#c8c8c8', y: '#ffff00', b: '#0000f0' };
const LINE = '#a00000';

const xAt = i => 6.6 + 12.85 * i;
let out = '';

function rect(x, y, w, h, attrs) {
    out += `<rect x="${x.toFixed(1)}" y="${y.toFixed(1)}" width="${w.toFixed(1)}" height="${h.toFixed(1)}" ${attrs}/>`;
}
function line(x1, y1, x2, y2, stroke, width, extra = '') {
    out += `<line x1="${x1.toFixed(1)}" y1="${y1.toFixed(1)}" x2="${x2.toFixed(1)}" y2="${y2.toFixed(1)}" stroke="${stroke}" stroke-width="${width}" ${extra}/>`;
}
function poly(points, stroke, width) {
    const d = points.map(p => p[0].toFixed(1) + ',' + p[1].toFixed(1)).join(' ');
    out += `<polyline points="${d}" fill="none" stroke="${stroke}" stroke-width="${width}" stroke-linejoin="round"/>`;
}
function text(x, y, label, color, size, anchor = 'end') {
    out += `<text x="${x}" y="${y}" fill="${color}" font-size="${size}" text-anchor="${anchor}" dominant-baseline="middle">${label}</text>`;
}
function arrow(x, top, bottom) {
    out += `<path d="M${x} ${top} L${x + 8} ${top + 10} H${x + 1.5} V${bottom} H${x - 1.5} V${top + 10} H${x - 8}Z" fill="#ff0000"/>`;
}
const dotted = 'stroke-dasharray="2 5"';

// grid first, everything sits on top of it
[199, 301, 401, 504].forEach(y => line(0, y, 1711, y, '#900000', 1.5, dotted));
line(14, 604, 1711, 604, '#900000', 1.5, dotted);
line(0, 706, 537, 706, '#900000', 1.5, dotted);
line(1621, 706, 1711, 706, '#900000', 1.5, dotted);
[876, 942, 1008, 1075, 1141, 1207].forEach(y => line(0, y, 1711, y, '#900000', 1.5, dotted));

line(1711, 67, 1711, 1282, LINE, 2);
line(0, 781, 1787, 781, LINE, 2);
line(1711, 1260, 1787, 1260, LINE, 2);
line(1749, 1260, 1749, 1282, LINE, 2);

// axis labels and ticks
const priceTicks = [[98,'8.50'],[149,'8.25'],[199,'8.00'],[250,'7.75'],[301,'7.50'],[352,'7.25'],[401,'7.00'],[453,'6.75'],[503,'6.50'],[554,'6.25'],[604,'6.00'],[654,'5.75'],[706,'5.50']];
priceTicks.forEach(([y, label]) => {
    line(1711, y, 1719, y, LINE, 1.5);
    text(1779, y + 2, label, '#c83030', 17.5);
});
[810, 876, 942, 1008, 1075, 1141, 1207].forEach((y, i) => {
    line(1711, y, 1719, y, LINE, 1.5);
    text(1779, y + 2, String(35000 - i * 5000), '#c83030', 17.5);
});
[843, 908, 974, 1042, 1108, 1173, 1239].forEach(y => line(1711, y, 1716, y, LINE, 1.5));
text(1714, 1272, 'X10', '#c83030', 17, 'start');

function candle(c, i, offset) {
    const [hi, top, bot, lo, kind] = c;
    const y = v => offset + v / 3;
    const x = xAt(i);
    const color = COLORS[kind];
    const wick = kind === 'c' ? '#3cc8c8' : kind === 'y' ? COLORS.r : color;
    line(x, y(hi), x, y(lo), wick, 1.5);
    if (kind === 'r') {
        rect(x - 4.5, y(top), 9, Math.max(y(bot) - y(top), 2), `fill="#000" stroke="${color}" stroke-width="1.5"`);
    } else if (kind === 'w') {
        rect(x - 5, y(top) - 1, 10, 2, `fill="${color}"`);
    } else {
        rect(x - 5.2, y(top), 10.4, Math.max(y(bot) - y(top), 3), `fill="${color}"`);
    }
}
leftCandles.forEach((c, i) => candle(c, i, 340));
rightCandles.forEach((c, i) => candle(c, i + 67, 80));

// support dashes over the candles
const dash = 'stroke-dasharray="4 2"';
[[175, 292, 584], [1020, 1130, 598], [1140, 1250, 665], [1490, 1568, 458]].forEach(([a, b, v]) =>
    line(a / X_SCALE, 340 + v / 3, b / X_SCALE, 340 + v / 3, '#00c800', 2, dash));
[[0, 37, 1238], [30, 155, 1414], [150, 270, 1063], [540, 640, 1170], [645, 760, 941], [670, 787, 991], [835, 950, 972], [925, 1045, 824], [950, 1068, 645]].forEach(([a, b, v]) =>
    line(860 + a / X_SCALE, 80 + v / 3, 860 + b / X_SCALE, 80 + v / 3, '#00c800', 2, dash));

const leftPts = (pts, off) => pts.map(p => [p[0] / X_SCALE, off + p[1] / 3]);
const rightPts = (pts, off) => pts.map(p => [860 + p[0] / X_SCALE, off + p[1] / 3]);

poly(leftPts(yellowHead, 340), '#ffff00', 2);
poly([...leftPts(yellowL, 340), ...rightPts(yellowR, 80)], '#ffff00', 3);
poly([...redHead, ...leftPts(redL, 340), ...rightPts(redR, 80)], '#ff0000', 3.5);

[[103, 1128, 1180], [243, 903, 955], [478, 812, 865], [806, 898, 950], [948, 795, 848], [1181, 755, 808], [1276, 768, 820], [1345, 758, 812], [1463, 740, 793], [1555, 645, 700]].forEach(([x, a, b]) =>
    arrow(x / X_SCALE, 340 + a / 3, 340 + b / 3));
[[59, 1493, 1555], [365, 1188, 1240], [458, 1345, 1398], [551, 1260, 1312], [644, 1160, 1213], [808, 1367, 1420], [926, 1273, 1325], [1020, 1088, 1140], [1396, 1390, 1442]].forEach(([x, a, b]) =>
    arrow(860 + x / X_SCALE, 80 + a / 3, 80 + b / 3));

// volume pane
function volBar(entry, i, offset, baseline) {
    const kind = entry.slice(-1);
    const top = offset + parseFloat(entry) / 3;
    const x = xAt(i);
    if (kind === 'c') {
        rect(x - 5.2, top, 10.4, baseline - top, `fill="${COLORS.c}"`);
    } else {
        rect(x - 4.5, top, 9, baseline - top, 'fill="#000" stroke="#e02424" stroke-width="1.5"');
    }
}
leftVolume.split(' ').forEach((e, i) => volBar(e, i, 1040, 1274));
rightVolume.split(' ').forEach((e, i) => volBar(e, i + 67, 790, 1274));

poly([...leftPts(maYellowL, 1040), ...rightPts(maYellowR, 790)], '#dcdc00', 1.5);
poly([...leftPts(maWhiteL, 1040), ...rightPts(maWhiteR, 790)], '#e0e0e0', 1.3);

// short ticks hanging on the time axis
[131, 191, 253, 375, 441, 515, 659, 721, 785, 934, 1004, 1066, 1217, 1283, 1354, 1471, 1524, 1576, 1675].forEach(x => line(x, 1277, x, 1282, LINE, 1.5));

document.getElementById('chart').innerHTML = out;
```
